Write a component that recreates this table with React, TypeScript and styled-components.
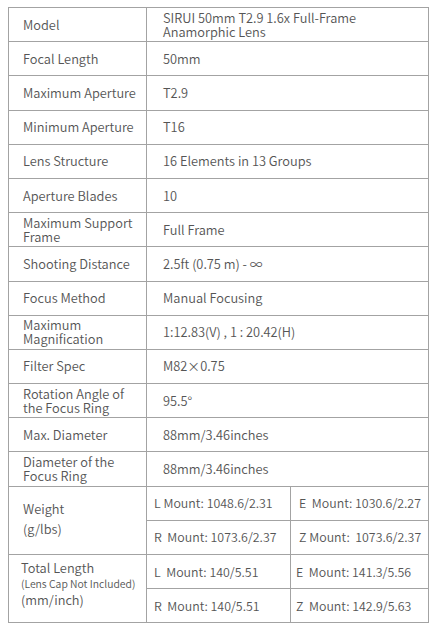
import React from "react";
import styled, { createGlobalStyle } from "styled-components";

const GlobalStyle = createGlobalStyle`
  body {
    margin: 0;
    background: #ffffff;
    font-family: "Noto Sans CJK SC", "Noto Sans", sans-serif;
  }
`;

const Page = styled.div`
  padding: 7px 8px;
`;

const SpecTable = styled.table`
  width: 420px;
  border-collapse: collapse;
  table-layout: fixed;
  color: #555555;
  font-size: 12.8px;
  font-weight: 350;
  border: 1px solid #a3a3a3;
`;

const Row = styled.tr`
  height: 34.2px;
`;

const Label = styled.td<{ $pad?: number; $lift?: number }>`
  border: 1px solid #a3a3a3;
  padding: 0 9px ${(p) => p.$lift ?? 0}px ${(p) => p.$pad ?? 14}px;
  line-height: 14px;
  vertical-align: middle;
`;

const Value = styled.td<{ $pad?: number }>`
  border: 1px solid #a3a3a3;
  padding: 0 2px 0 ${(p) => p.$pad ?? 16}px;
  line-height: 14px;
  vertical-align: middle;
  white-space: pre;
`;

const MountValue = styled(Value)`
  font-size: 12.4px;
`;

const Lines = styled.div<{ $gap: number }>`
  display: flex;
  flex-direction: column;
  gap: ${(p) => p.$gap}px;
  line-height: 16px;
  white-space: nowrap;
`;

const Small = styled.span`
  font-size: 10.4px;
  line-height: 14px;
`;

type Spec = [string, string];

const specs: Spec[] = [
  ["Model", "SIRUI 50mm T2.9 1.6x Full-Frame\nAnamorphic Lens"],
  ["Focal Length", "50mm"],
  ["Maximum Aperture", "T2.9"],
  ["Minimum Aperture", "T16"],
  ["Lens Structure", "16 Elements in 13 Groups"],
  ["Aperture Blades", "10"],
  ["Maximum Support Frame", "Full Frame"],
  ["Shooting Distance", "2.5ft (0.75 m) - ∞"],
  ["Focus Method", "Manual Focusing"],
  ["Maximum Magnification", "1:12.83(V) , 1 : 20.42(H)"],
  ["Filter Spec", "M82×0.75"],
  ["Rotation Angle of the Focus Ring", "95.5°"],
  ["Max. Diameter", "88mm/3.46inches"],
  ["Diameter of the Focus Ring", "88mm/3.46inches"],
];

const App = () => {
  return (
    <Page>
      <GlobalStyle />
      <SpecTable>
        <colgroup>
          <col style={{ width: 138 }} />
          <col style={{ width: 144 }} />
          <col style={{ width: 138 }} />
        </colgroup>
        <tbody>
          {specs.map(([label, value]) => (
            <Row key={label}>
              <Label>{label}</Label>
              <Value colSpan={2}>{value}</Value>
            </Row>
          ))}
          <Row>
            <Label rowSpan={2} $lift={2}>
              <Lines $gap={4}>
                <span>Weight</span>
                <span>(g/lbs)</span>
              </Lines>
            </Label>
            <MountValue $pad={7}>L Mount: 1048.6/2.31</MountValue>
            <MountValue $pad={8}>E  Mount: 1030.6/2.27</MountValue>
          </Row>
          <Row>
            <MountValue $pad={7}>R  Mount: 1073.6/2.37</MountValue>
            <MountValue $pad={8}>Z Mount:  1073.6/2.37</MountValue>
          </Row>
          <Row>
            <Label rowSpan={2} $pad={12} $lift={10}>
              <Lines $gap={1}>
                <span>Total Length</span>
                <Small>(Lens Cap Not Included)</Small>
                <span>(mm/inch)</span>
              </Lines>
            </Label>
            <MountValue $pad={7}>L  Mount: 140/5.51</MountValue>
            <MountValue $pad={5}>E  Mount: 141.3/5.56</MountValue>
          </Row>
          <Row>
            <MountValue $pad={7}>R  Mount: 140/5.51</MountValue>
            <MountValue $pad={5}>Z  Mount: 142.9/5.63</MountValue>
          </Row>
        </tbody>
      </SpecTable>
    </Page>
  );
};

export default App;
